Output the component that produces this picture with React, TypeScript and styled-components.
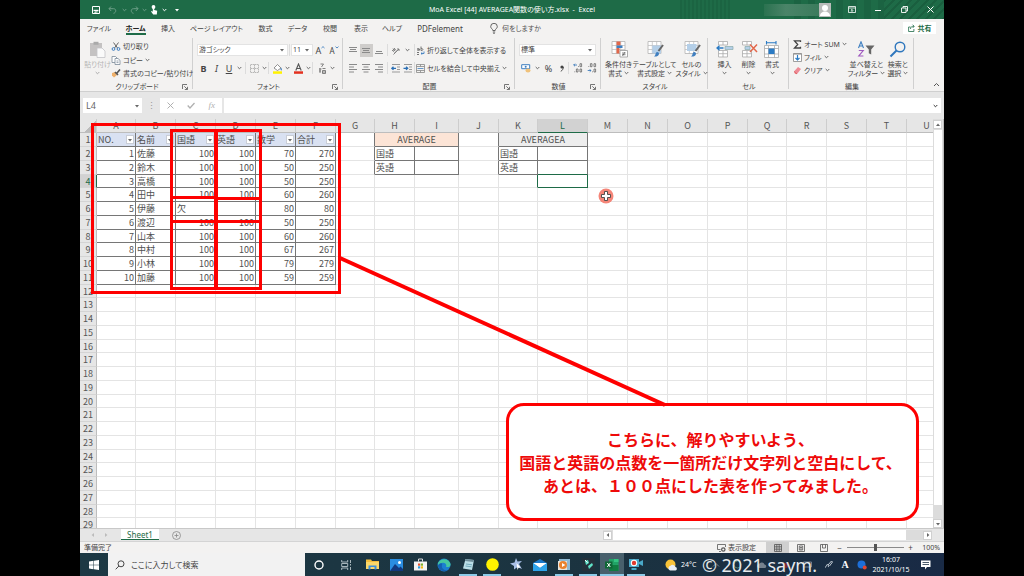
import React from 'react';
import styled, { createGlobalStyle, css } from 'styled-components';

const GREEN = '#1e6b47';
const RED = '#fe0000';
const UI = '"Noto Sans", "Noto Sans CJK JP", sans-serif';
const SHEET = '"Noto Sans CJK JP", "Noto Sans", sans-serif';

const Global = createGlobalStyle`
  *, *::before, *::after { box-sizing: border-box; }
  body { margin: 0; background: #000; }
  button, input, select { font: inherit; color: inherit; margin: 0; padding: 0; border: 0; background: none; border-radius: 0; font-feature-settings: inherit; }
  svg { display: block; flex: none; }
`;

const Page = styled.div`
  display: grid;
  grid-template-columns: 5fr 54fr 5fr;
  height: 100vh;
  background: #000;
  font-family: ${UI};
  font-size: 7px;
  line-height: 9px;
  font-feature-settings: 'palt';
  color: #444;
`;

const Window = styled.main`
  grid-column: 2;
  display: flex;
  flex-direction: column;
  min-width: 0;
  min-height: 0;
  background: #e6e6e6;
  overflow: hidden;
`;

/* ---------- title bar ---------- */

const TitleBar = styled.header`
  flex: none;
  display: grid;
  grid-template-columns: 1fr auto 1fr;
  align-items: center;
  height: 19px;
  background:
    repeating-linear-gradient(135deg, #1a5f3f 0 2px, transparent 2px 6px) right 0 top 0 / 60px 19px no-repeat,
    repeating-linear-gradient(90deg, #1b6442 0 2px, transparent 2px 4px) right 214px top 0 / 50px 19px no-repeat,
    repeating-linear-gradient(90deg, #1b6342 0 7px, transparent 7px 14px) right 60px top 0 / 90px 19px no-repeat,
    ${GREEN};
  color: #fff;
`;
const Title = styled.h1`
  margin: 0;
  font-size: 7px;
  line-height: 19px;
  font-weight: 400;
  white-space: pre;
`;
const QuickBar = styled.div`
  display: flex;
  align-items: center;
  padding-left: 10px;
`;
const WindowButtons = styled.div`
  display: flex;
  align-items: center;
  justify-content: flex-end;
`;
const BarButton = styled.button<{ $w: number; $dim?: boolean }>`
  display: flex;
  align-items: center;
  justify-content: center;
  width: ${p => p.$w}px;
  height: 19px;
  opacity: ${p => (p.$dim ? 0.35 : 1)};
`;
const UserName = styled.span`
  width: 55px;
  height: 12px;
  background: linear-gradient(90deg, #2b7250, #4a8468 40%, #3b7b5c);
`;
const Avatar = styled.span`
  width: 12px;
  height: 14px;
  margin-right: 7px;
  background: #b9bcba;
`;

/* ---------- ribbon ---------- */

const TabStrip = styled.nav`
  flex: none;
  display: flex;
  align-items: stretch;
  height: 19px;
  padding: 0 8px 0 0;
  background: #f3f2f1;
`;
const RibbonTab = styled.button<{ $w: number; $active?: boolean }>`
  display: flex;
  justify-content: center;
  align-items: center;
  width: ${p => p.$w}px;
  white-space: nowrap;
  line-height: 17px;
  ${p => p.$active && css`
    font-weight: 700;
    color: #222;
    background: linear-gradient(${GREEN}, ${GREEN}) center bottom 3px / 20px 2px no-repeat;
  `}
`;
const Latin = styled.span`
  font-size: 8px;
`;
const TellMe = styled.label`
  display: flex;
  align-items: center;
  gap: 4px;
  margin-left: 18px;
  input { width: 60px; height: 17px; }
  input::placeholder { color: #555; opacity: 1; }
`;
const ShareButton = styled.button`
  display: flex;
  align-items: center;
  justify-content: center;
  gap: 3px;
  width: 33px;
  height: 12px;
  margin: 3px 0 0 auto;
  background: #fff;
  color: ${GREEN};
  font-weight: 700;
`;

const Ribbon = styled.div`
  flex: none;
  display: flex;
  height: 54px;
  background: #f3f2f1;
  border-bottom: 1px solid #cfcfcf;
`;
const Group = styled.section<{ $w: number }>`
  flex: none;
  display: flex;
  flex-direction: column;
  width: ${p => p.$w}px;
  padding: 0 3px 0 4px;
  background: linear-gradient(#d0d0d0, #d0d0d0) right top / 1px 51px no-repeat;
`;
const GroupBody = styled.div<{ $column?: boolean }>`
  display: flex;
  flex-direction: ${p => (p.$column ? 'column' : 'row')};
  height: 44px;
`;
const GroupFoot = styled.footer`
  display: grid;
  grid-template-columns: 8px 1fr 8px;
  align-items: center;
  text-align: center;
  height: 9px;
  line-height: 9px;
  white-space: nowrap;
`;
const ToolRow = styled.div<{ $top?: number }>`
  display: flex;
  align-items: center;
  height: 12px;
  margin-top: ${p => p.$top ?? 0}px;
`;
const Tool = styled.button<{ $w: number; $on?: boolean; $size?: number }>`
  flex: none;
  display: flex;
  align-items: center;
  justify-content: center;
  width: ${p => p.$w}px;
  height: 13px;
  font-size: ${p => p.$size ?? 9}px;
  background: ${p => (p.$on ? '#cfcdcb' : 'none')};
`;
const CollapseButton = styled(Tool)`
  margin: auto 1px 0 auto;
`;
const Divider = styled.i`
  flex: none;
  width: 1px;
  height: 12px;
  margin: 0 1px;
  background: #dcdcdc;
`;
const LabelTool = styled.button`
  display: flex;
  align-items: center;
  gap: 2px;
  height: 13px;
  white-space: nowrap;
`;
const BigTool = styled.button<{ $w: number; $dim?: boolean }>`
  flex: none;
  display: flex;
  flex-direction: column;
  align-items: center;
  width: ${p => p.$w}px;
  padding-top: 3px;
  line-height: 9px;
  white-space: nowrap;
  color: ${p => (p.$dim ? '#b5b5b5' : '#444')};
  svg:first-child { margin-bottom: 2px; }
`;
const Line = styled.span`
  display: flex;
  align-items: center;
  justify-content: center;
  gap: 2px;
  min-height: 9px;
`;
const Picker = styled.span<{ $w: number }>`
  flex: none;
  display: grid;
  grid-template-columns: 1fr 8px;
  align-items: center;
  width: ${p => p.$w}px;
  height: 12px;
  background: #fff;
  border: 1px solid #e3e3e3;
  select {
    appearance: none;
    grid-area: 1 / 1 / 2 / 3;
    width: 100%;
    height: 10px;
    line-height: 10px;
    padding-left: 1px;
  }
  svg { grid-area: 1 / 2; pointer-events: none; }
`;

/* ---------- formula bar ---------- */

const FormulaBar = styled.div`
  flex: none;
  display: flex;
  align-items: flex-start;
  height: 27px;
  padding: 6px 3px 0 3px;
  background: #e6e6e6;
`;
const NameBox = styled.label`
  display: flex;
  align-items: center;
  width: 59px;
  height: 15px;
  padding-right: 4px;
  background: #fff;
  input { width: 51px; padding-left: 3px; font-size: 9px; line-height: 15px; color: #666; }
`;
const Grip = styled.span`
  width: 18px;
  line-height: 15px;
  font-size: 9px;
  text-align: center;
  color: #999;
`;
const FxTools = styled.div`
  display: flex;
  width: 62px;
  height: 15px;
  margin-right: 2px;
  background: #fff;
  color: #b0b0b0;
`;
const FxButton = styled.button`
  flex: 1;
  display: flex;
  align-items: center;
  justify-content: center;
  font: italic 9px/13px "Liberation Serif", serif;
`;
const FormulaField = styled.label`
  flex: 1;
  display: flex;
  align-items: center;
  height: 15px;
  padding-right: 3px;
  background: #fff;
  input { flex: 1; min-width: 0; }
`;

/* ---------- worksheet ---------- */

const SheetRow = styled.div`
  flex: 1;
  display: flex;
  min-height: 0;
`;
const Viewport = styled.div`
  position: relative;
  flex: 1;
  min-width: 0;
  overflow: hidden;
  background: #fff;
`;
const Grid = styled.table`
  table-layout: fixed;
  width: 100%;
  min-width: 867px;
  border-collapse: separate;
  border-spacing: 0;
  font-family: ${SHEET};
  font-size: 9px;
  font-feature-settings: normal;
  line-height: 12px;
  color: #505050;
  tbody tr > * { height: 14px; }
  tbody tr:nth-child(4n) > * { height: 13px; line-height: 11px; }
`;
const ColHead = styled.th<{ $on?: boolean }>`
  height: 14px;
  padding: 1px 0 0;
  line-height: 12px;
  font-weight: 400;
  text-align: center;
  background: ${p => (p.$on ? '#d2d2d2' : '#e6e6e6')};
  color: ${p => (p.$on ? GREEN : '#555')};
  border-right: 1px solid #cdcdcd;
  border-bottom: 1px solid ${p => (p.$on ? GREEN : '#bdbdbd')};
`;
const Corner = styled(ColHead)`
  background: linear-gradient(135deg, #e6e6e6 60%, #bcbcbc 60%);
`;
const RowHead = styled.th<{ $on?: boolean }>`
  padding: 0;
  font-weight: 400;
  text-align: center;
  background: ${p => (p.$on ? '#d2d2d2' : '#e6e6e6')};
  color: ${p => (p.$on ? GREEN : '#555')};
  border-right: 1px solid ${p => (p.$on ? GREEN : '#bdbdbd')};
  border-bottom: 1px solid #d4d4d4;
`;
type CellKind = { $num?: boolean; $boxed?: boolean; $fill?: string; $center?: boolean; $active?: boolean; $over?: boolean; $edge?: string };
const Cell = styled.td<CellKind>`
  padding: 0 1px;
  overflow: hidden;
  white-space: nowrap;
  vertical-align: middle;
  text-align: ${p => (p.$center ? 'center' : p.$num ? 'right' : 'left')};
  background: ${p => p.$fill ?? 'transparent'};
  border-right: 1px solid ${p => p.$edge ?? (p.$active ? GREEN : p.$boxed ? '#767676' : '#e4e4e4')};
  border-bottom: 1px solid ${p => (p.$active || p.$over ? GREEN : p.$boxed ? '#767676' : '#e4e4e4')};
`;
const FilterHead = styled.div`
  display: flex;
  align-items: center;
  justify-content: space-between;
  height: 12px;
`;
const FilterButton = styled.button`
  display: flex;
  align-items: center;
  justify-content: center;
  width: 8px;
  height: 9px;
  background: #fff;
  border: 1px solid #c9cdd6;
`;

const Frame = styled.div<{ $x: number; $y: number; $w: number; $h: number }>`
  position: absolute;
  left: ${p => p.$x}px;
  top: ${p => p.$y}px;
  width: ${p => p.$w}px;
  height: ${p => p.$h}px;
  border: 3px solid ${RED};
`;
const Leader = styled.svg`
  position: absolute;
  left: 0;
  top: 0;
`;
const Callout = styled.p`
  position: absolute;
  left: 426px;
  top: 284px;
  width: 413px;
  height: 118px;
  margin: 0;
  padding-right: 4px;
  display: flex;
  flex-direction: column;
  align-items: center;
  justify-content: center;
  border: 3px solid ${RED};
  border-radius: 18px;
  background: #fff;
  color: #ee0a0a;
  font-family: ${SHEET};
  font-size: 16px;
  line-height: 23px;
  font-weight: 700;
  font-feature-settings: normal;
  white-space: nowrap;
`;
const Pointer = styled.svg`
  position: absolute;
  left: 518px;
  top: 69px;
`;

const VScroll = styled.div`
  flex: none;
  display: flex;
  flex-direction: column;
  width: 11px;
  padding: 1px 1px 0 0;
  background: #dcdcdc;
  border-right: 1px solid #bcbcbc;
`;
const ScrollButton = styled.button`
  flex: none;
  display: flex;
  align-items: center;
  justify-content: center;
  width: 9px;
  height: 9px;
  background: #fff;
  border: 1px solid #d0d0d0;
`;
const VThumb = styled.div`
  flex: 1;
  margin: 1px 0 14px 1px;
  background: #fff;
`;

/* ---------- sheet tabs and status ---------- */

const SheetTabs = styled.div`
  flex: none;
  display: flex;
  align-items: center;
  height: 13px;
  border-top: 1px solid #c8c8c8;
  background: #e6e6e6;
`;
const TabArrows = styled.div`
  display: flex;
  gap: 7px;
  width: 41px;
  padding-left: 10px;
`;
const SheetTab = styled.button`
  width: 38px;
  height: 11px;
  margin-bottom: 1px;
  background: #fff;
  border-bottom: 1px solid ${GREEN};
  color: ${GREEN};
  font-size: 8px;
  line-height: 9px;
`;
const AddSheet = styled.button`
  margin-left: 13px;
`;
const HScroll = styled.div`
  display: flex;
  align-items: center;
  width: 329px;
  margin: 0 12px 0 auto;
  height: 10px;
  background: #dcdcdc;
`;
const HThumb = styled.div`
  flex: 1;
  height: 10px;
  margin: 0 17px 0 1px;
  background: #fff;
`;
const StatusBar = styled.div`
  flex: none;
  display: flex;
  align-items: center;
  height: 12px;
  padding: 0 4px;
  background: #f3f2f1;
  border-top: 1px solid #d4d4d4;
`;
const StatusTools = styled.div`
  display: flex;
  align-items: center;
  margin-left: auto;
`;
const DisplaySettings = styled(LabelTool)`
  margin-right: 10px;
`;
const ViewButton = styled.button<{ $on?: boolean }>`
  display: flex;
  align-items: center;
  justify-content: center;
  width: 23px;
  height: 11px;
  background: ${p => (p.$on ? '#cfcfcf' : 'none')};
`;
const Zoom = styled.input`
  appearance: none;
  width: 57px;
  height: 9px;
  margin: 0 3px;
  background: linear-gradient(#8a8a8a, #8a8a8a) center / 100% 1px no-repeat;
  &::-webkit-slider-thumb { appearance: none; width: 3px; height: 7px; background: #555; }
`;
const Percent = styled.output`
  width: 26px;
  text-align: right;
`;

/* ---------- task bar ---------- */

const TaskBar = styled.footer`
  position: relative;
  flex: none;
  display: flex;
  align-items: stretch;
  height: 23px;
  background: linear-gradient(90deg, #1d3944, #1b3340 60%, #192a45);
  color: #fff;
`;
const TaskButton = styled.button<{ $w?: number; $running?: boolean; $on?: boolean }>`
  flex: none;
  display: flex;
  align-items: center;
  justify-content: center;
  width: ${p => p.$w ?? 24}px;
  background: ${p => (p.$on ? '#48606c' : 'none')};
  ${p => p.$running && css`
    background-image: linear-gradient(#8ccbe8, #8ccbe8);
    background-size: ${p.$on ? 24 : 18}px 2px;
    background-position: center bottom;
    background-repeat: no-repeat;
  `}
`;
const Search = styled.label`
  display: flex;
  align-items: center;
  gap: 6px;
  width: 197px;
  padding-left: 7px;
  background: #f2f2f2;
  color: #444;
  input { flex: 1; min-width: 0; font-size: 8px; }
  input::placeholder { color: #444; opacity: 1; }
`;
const Tray = styled.div`
  display: flex;
  align-items: center;
  margin-left: auto;
  padding-right: 4px;
`;
const Weather = styled.button`
  display: flex;
  align-items: center;
  gap: 4px;
  width: 40px;
  font-size: 7px;
`;
const Hidden = styled.div`
  display: flex;
  align-items: center;
  justify-content: space-around;
  width: 114px;
  opacity: 0.4;
`;
const TrayButton = styled.button<{ $w: number }>`
  display: flex;
  align-items: center;
  justify-content: center;
  width: ${p => p.$w}px;
  font: 700 10px/12px "Liberation Serif", serif;
`;
const Clock = styled.time`
  width: 42px;
  text-align: center;
  font-size: 7px;
  line-height: 10px;
`;
const Watermark = styled.span`
  position: absolute;
  right: 127px;
  top: 0;
  font-size: 18px;
  line-height: 25px;
  color: #e6eaed;
  white-space: nowrap;
`;

/* ---------- small drawings ---------- */

const Chevron = ({ c = '#666' }: { c?: string }) => (
  <svg width="5" height="4" viewBox="0 0 5 4" fill="none" stroke={c}><path d="M.7 1l1.8 1.8L4.3 1" /></svg>
);
const Caret = ({ c = '#666', r = 0 }: { c?: string; r?: number }) => (
  <svg width="6" height="6" viewBox="0 0 6 6" fill={c}><path d="M1 2h4L3 4.4z" transform={`rotate(${r} 3 3)`} /></svg>
);
const Launcher = () => (
  <svg width="6" height="6" viewBox="0 0 6 6" fill="none" stroke="#666" strokeWidth=".9"><path d="M.5 5V.5H5M2.3 2.3l3 3M5.5 2.8v2.7H2.8" /></svg>
);
const Bars = ({ d }: { d: string }) => (
  <svg width="9" height="9" viewBox="0 0 9 9" fill="none" stroke="#8a8a8a"><path d={d} /></svg>
);
const Wand = () => (
  <svg width="10" height="9" viewBox="0 0 10 9"><path d="M1 4l3-1 2 3-3 2.500-2-2z" fill="#eeb06b" /><path d="M4 3l3 3M6 4l3-3.500" stroke="#555" strokeWidth="1.600" /></svg>
);
const GridBase = ({ children }: { children?: React.ReactNode }) => (
  <svg width="18" height="17" viewBox="0 0 18 17">
    <path d="M2 .5h13v12H2z" fill="#fff" stroke="#b2b2b2" strokeWidth=".8" />
    <path d="M2 4.500h13M2 8.500h13M6.300.5v12M10.700.5v12" stroke="#b9b9b9" strokeWidth=".7" />
    {children}
  </svg>
);
const Brush = () => (
  <g><path d="M17 4l-4.500 6" stroke="#666" strokeWidth="2" /><path d="M8 15.500c2 .2 4.500 0 5-2.500.2-1.500-1.500-2.500-2.700-1.600C9 12.500 10 14 8 15.500z" fill="#3f7fc0" /></g>
);
const Blocks = ({ children }: { children?: React.ReactNode }) => (
  <svg width="18" height="17" viewBox="0 0 18 17">
    <path d="M2.500.5h9v3.500h-9zM7 .5V4M2.500 9.500h9v6.500h-9zM7 9.500V16M2.500 12.700h9" fill="#fff" stroke="#aaa" strokeWidth=".8" />
    {children}
  </svg>
);

/* ---------- data ---------- */

const COLUMNS = 'ABCDEFGHIJKLMNOPQRSTU'.split('');
const WIDTHS = [39, 40, 40, 40, 40, 40, 39, 40, 44, 40, 39, 50, 40, 40, 40, 40, 39, 40, 40, 40];
const HEADINGS = ['NO.', '名前', '国語', '英語', '数学', '合計'];
const SCORES: (string | number)[][] = [
  [1, '佐藤', 100, 100, 70, 270],
  [2, '鈴木', 100, 100, 50, 250],
  [3, '高橋', 100, 100, 50, 250],
  [4, '田中', 100, 100, 60, 260],
  [5, '伊藤', '欠', '', 80, 80],
  [6, '渡辺', 100, 100, 50, 250],
  [7, '山本', 100, 100, 60, 260],
  [8, '中村', 100, 100, 67, 267],
  [9, '小林', 100, 100, 79, 279],
  [10, '加藤', 100, 100, 59, 259],
];
const SUBJECTS: Record<number, string> = { 2: '国語', 3: '英語' };

const renderCell = (col: string, row: number) => {
  const i = COLUMNS.indexOf(col);
  if (i < 6 && row === 1) {
    return (
      <Cell key={col} $boxed $fill="#d9e1f2">
        <FilterHead>{HEADINGS[i]}<FilterButton aria-label={`${HEADINGS[i]} フィルター`}><Caret /></FilterButton></FilterHead>
      </Cell>
    );
  }
  if (i < 6 && row <= 11) {
    const v = SCORES[row - 2][i];
    return <Cell key={col} $boxed $num={typeof v === 'number'}>{v}</Cell>;
  }
  if (row === 1) {
    if (col === 'H') return <Cell key={col} colSpan={2} $boxed $center $fill="#fce4d6">AVERAGE</Cell>;
    if (col === 'K') return <Cell key={col} colSpan={2} $boxed $center $fill="#ededed">AVERAGEA</Cell>;
    if (col === 'I' || col === 'L') return null;
  }
  if (row <= 3 && (col === 'G' || col === 'J')) return <Cell key={col} $edge="#767676" />;
  if (row <= 3 && 'HIKL'.includes(col)) {
    return <Cell key={col} $boxed $over={col === 'L' && row === 3}>{col === 'H' || col === 'K' ? SUBJECTS[row] : ''}</Cell>;
  }
  return <Cell key={col} $active={col === 'L' && row === 4} $edge={col === 'K' && row === 4 ? GREEN : undefined} />;
};

const TABS: [string, number][] = [
  ['ファイル', 38], ['ホーム', 35], ['挿入', 30], ['ページ レイアウト', 67], ['数式', 31], ['データ', 33], ['校閲', 32], ['表示', 30], ['ヘルプ', 32],
];

const Foot = ({ children, launcher = true }: { children: React.ReactNode; launcher?: boolean }) => (
  <GroupFoot><span /><span>{children}</span>{launcher ? <Launcher /> : <span />}</GroupFoot>
);

export default function App() {
  return (
    <Page lang="ja">
      <Global />
      <Window>
        <TitleBar>
          <QuickBar>
            <BarButton $w={12} aria-label="上書き保存"><svg width="8" height="8" viewBox="0 0 8 8" fill="none" stroke="#fff"><path d="M.5.500h7v7h-7z" /><path d="M1.500 4.500h5" strokeWidth="1.400" /><path d="M3 7.500V6h2.500" /></svg></BarButton>
            <BarButton $w={20} $dim aria-label="元に戻す"><svg width="9" height="8" viewBox="0 0 9 8" fill="none" stroke="#fff"><path d="M3 .5L1 2.700 3.200 5M1 2.700h4.500c3 0 3 4 0 4.600" /></svg></BarButton>
            <BarButton $w={4} $dim aria-label="元に戻す一覧"><Chevron c="#fff" /></BarButton>
            <BarButton $w={16} $dim aria-label="やり直し"><svg width="9" height="8" viewBox="0 0 9 8" fill="none" stroke="#fff"><path d="M6 .5l2 2.200L5.800 5M8 2.700H3.500c-3 0-3 4 0 4.600" /></svg></BarButton>
            <BarButton $w={5} $dim aria-label="やり直し一覧"><Chevron c="#fff" /></BarButton>
            <BarButton $w={14} aria-label="タッチ モード"><svg width="9" height="10" viewBox="0 0 9 10" fill="#fff"><circle cx="3.500" cy="2" r="1.900" /><path d="M2.800 2h1.400v3l3 .8-.4 3.700H3.200L1 6.500l.8-.6 1 .8z" /></svg></BarButton>
            <BarButton $w={6} aria-label="モード一覧"><Chevron c="#fff" /></BarButton>
            <BarButton $w={20} aria-label="クイック アクセスのカスタマイズ"><Caret c="#fff" /></BarButton>
          </QuickBar>
          <Title>MoA Excel [44] AVERAGEA関数の使い方.xlsx  -  Excel</Title>
          <WindowButtons>
            <UserName />
            <Avatar><svg width="12" height="14" viewBox="0 0 12 14" fill="#fff"><circle cx="6" cy="5" r="3" /><path d="M1 13c0-6 10-6 10 0z" /></svg></Avatar>
            <BarButton $w={27} aria-label="リボンの表示"><svg width="8" height="7" viewBox="0 0 8 7" fill="none" stroke="#fff"><path d="M.5.500h7v6h-7zM.5 2h7M4 6V3.500M2.800 4.700L4 3.500l1.200 1.200" strokeWidth=".8" /></svg></BarButton>
            <BarButton $w={26} aria-label="最小化"><svg width="6" height="6" viewBox="0 0 6 6" stroke="#fff"><path d="M0 3.500h6" /></svg></BarButton>
            <BarButton $w={26} aria-label="元のサイズ"><svg width="7" height="7" viewBox="0 0 7 7" fill="none" stroke="#fff" strokeWidth=".9"><path d="M.5 2h4.500v4.500H.5zM2 2V.5h4.500V5H5" /></svg></BarButton>
            <BarButton $w={27} aria-label="閉じる"><svg width="7" height="7" viewBox="0 0 7 7" stroke="#fff"><path d="M.5.500l6 6M6.500.500l-6 6" /></svg></BarButton>
          </WindowButtons>
        </TitleBar>

        <TabStrip>
          {TABS.map(([name, w]) => <RibbonTab key={name} $w={w} $active={name === 'ホーム'}>{name}</RibbonTab>)}
          <RibbonTab $w={64}><Latin>PDFelement</Latin></RibbonTab>
          <TellMe>
            <svg width="8" height="11" viewBox="0 0 8 11" fill="none" stroke="#555" strokeWidth=".9"><path d="M2.800 7.500C2.800 6 .7 5.500.7 3.600a3.300 3.300 0 0 1 6.600 0c0 1.900-2.100 2.400-2.100 3.900zM2.800 9h2.400M3.200 10.300h1.600" /></svg>
            <input placeholder="何をしますか" aria-label="何をしますか" />
          </TellMe>
          <ShareButton>
            <svg width="7" height="8" viewBox="0 0 7 8" fill="none" stroke={GREEN} strokeWidth=".8"><path d="M2.500 3H.6v4.500h5.300V5M2.500 5c0-2 1-2.700 3.500-2.700M4.600.7L6.200 2.300 4.600 4" /></svg>
            共有
          </ShareButton>
        </TabStrip>

        <Ribbon>
          <Group $w={113}>
            <GroupBody>
              <BigTool $w={27} $dim>
                <svg width="17" height="17" viewBox="0 0 17 17"><path d="M1 2h12v13H1z" fill="#c4c2c2" /><path d="M4.500.8h5v3h-5z" fill="#aaa" /><path d="M8 7h5l3 3v6.500H8z" fill="#fafafa" stroke="#c4c4c8" strokeWidth=".8" /></svg>
                貼り付け
                <Line><Chevron c="#aaa" /></Line>
              </BigTool>
              <GroupBody $column>
                <ToolRow $top={2}><LabelTool>
                  <svg width="10" height="9" viewBox="0 0 10 9" fill="none"><path d="M2.500.5l4 5.500M7.500.5l-4 5.500" stroke="#666" /><circle cx="2.500" cy="7" r="1.400" stroke="#3f7fc0" /><circle cx="7.500" cy="7" r="1.400" stroke="#3f7fc0" /></svg>切り取り
                </LabelTool></ToolRow>
                <ToolRow $top={2}><LabelTool>
                  <svg width="10" height="9" viewBox="0 0 10 9" fill="#fff" stroke="#7b8a99" strokeWidth=".8"><path d="M1 .5h3.500L6 2v4.500H1z" /><path d="M4 2.500h3L9 4.300v4.200H4zM5.500 5h2M5.500 6.600h2" /></svg>コピー<Chevron />
                </LabelTool></ToolRow>
                <ToolRow $top={1}><LabelTool><Wand />書式のコピー/貼り付け</LabelTool></ToolRow>
              </GroupBody>
            </GroupBody>
            <Foot>クリップボード</Foot>
          </Group>

          <Group $w={150}>
            <GroupBody $column>
              <ToolRow $top={6}>
                <Picker $w={91}><select aria-label="フォント"><option>游ゴシック</option></select><Caret /></Picker>
                <Divider />
                <Picker $w={22}><select aria-label="フォント サイズ"><option>11</option></select><Caret /></Picker>
                <Tool $w={15} $size={9} aria-label="拡大">A<svg width="4" height="8" viewBox="0 0 4 8" fill="none" stroke="#3f7fc0" strokeWidth=".9"><path d="M.5 2L2 .6 3.500 2" /></svg></Tool>
                <Tool $w={12} $size={8} aria-label="縮小">A<svg width="4" height="8" viewBox="0 0 4 8" fill="none" stroke="#3f7fc0" strokeWidth=".9"><path d="M.5.6L2 2 3.500.6" /></svg></Tool>
              </ToolRow>
              <ToolRow $top={6}>
                <Tool $w={13}><b>B</b></Tool>
                <Tool $w={13}><i>I</i></Tool>
                <Tool $w={12}><u>U</u></Tool>
                <Tool $w={9} aria-label="下線の種類"><Chevron /></Tool>
                <Divider />
                <Tool $w={14} aria-label="罫線"><svg width="9" height="9" viewBox="0 0 9 9" fill="none" stroke="#a8a8a8" strokeWidth=".8"><path d="M.5.500h8v8h-8zM4.500.500v8M.5 4.500h8" strokeDasharray="1.500 .5" /></svg></Tool>
                <Tool $w={6} aria-label="罫線の種類"><Chevron /></Tool>
                <Divider />
                <Tool $w={14} aria-label="塗りつぶし"><svg width="11" height="11" viewBox="0 0 11 11"><path d="M2 5l3.500-3.500L9 5 5.500 7.500z" fill="#fff" stroke="#777" strokeWidth=".8" /><path d="M9 4.500c1.500 2 .8 3 .3 3S8 6.500 9 4.500z" fill="#3f7fc0" /><path d="M1 8.300h9v2.500H1z" fill="#fff200" /></svg></Tool>
                <Tool $w={6} aria-label="塗りつぶしの色"><Chevron /></Tool>
                <Tool $w={16} aria-label="文字の色"><svg width="11" height="11" viewBox="0 0 11 11"><path d="M2.800 7.500L5.500 1l2.700 6.500M3.800 5.500h3.400" fill="none" stroke="#555" strokeWidth="1.100" /><path d="M1 8.300h9v2.500H1z" fill="#e33120" /></svg></Tool>
                <Tool $w={5} aria-label="文字の色一覧"><Chevron /></Tool>
                <Divider />
                <Tool $w={15} aria-label="ふりがな"><svg width="8" height="11" viewBox="0 0 8 11" fill="none" stroke="#666" strokeWidth=".8"><path d="M2.500 1h3L3.500 4M1 6h2.500M2 5v5M1 8h2M4.500 5.500h3M4.500 7.500h3v3h-3zM4.500 9h3" /></svg></Tool>
                <Tool $w={6} aria-label="ふりがな一覧"><Chevron /></Tool>
              </ToolRow>
            </GroupBody>
            <Foot>フォント</Foot>
          </Group>

          <Group $w={172}>
            <GroupBody $column>
              <ToolRow $top={6}>
                <Tool $w={13} aria-label="上揃え"><Bars d="M0 1.500h8M1 3.500h6M0 5.500h8" /></Tool>
                <Tool $w={13} $on aria-label="上下中央"><Bars d="M0 2.500h8M1 4.500h6M0 6.500h8" /></Tool>
                <Tool $w={13} aria-label="下揃え"><Bars d="M1 5.500h6M0 7.500h8" /></Tool>
                <Divider />
                <Tool $w={12} aria-label="方向"><svg width="9" height="9" viewBox="0 0 9 9" fill="none" stroke="#777" strokeWidth=".9"><path d="M1 5l3-3M2 2.500l2.500 3M3.500 6.500a1.500 1.500 0 1 1 2-2M2.500 8.500L8 3M8 5V3H6" /></svg></Tool>
                <Tool $w={12} aria-label="方向一覧"><Chevron /></Tool>
                <Divider />
                <LabelTool>
                  <svg width="9" height="9" viewBox="0 0 9 9" fill="none" strokeWidth=".9"><path d="M1 3c1.500-1 2.500 0 2.500 1.500M3.500 3C1.500 3 1 4.500 2 4.500S3.500 3.500 3.500 3M5 .5v4c2.500.5 2.500-2.500 0-2M1 6.500h2M1 8.500h2" stroke="#666" /><path d="M8 5.500v2H5M6.300 6.300L5 7.500l1.300 1.200" stroke="#3f7fc0" /></svg>折り返して全体を表示する
                </LabelTool>
              </ToolRow>
              <ToolRow $top={6}>
                <Tool $w={13} aria-label="左揃え"><Bars d="M0 .5h8M0 3h5M0 5.500h8M0 8h5" /></Tool>
                <Tool $w={13} aria-label="中央揃え"><Bars d="M0 .5h8M1.500 3h5M0 5.500h8M1.500 8h5" /></Tool>
                <Tool $w={13} aria-label="右揃え"><Bars d="M0 .5h8M3 3h5M0 5.500h8M3 8h5" /></Tool>
                <Divider />
                <Tool $w={12} aria-label="インデントを減らす"><svg width="9" height="9" viewBox="0 0 9 9" fill="none"><path d="M1 .5h8M6 3h3M6 5.500h3M1 8h8" stroke="#999" /><path d="M5 4.300H.8M2.500 2.700L.8 4.300l1.700 1.600" stroke="#2b6fb5" strokeWidth="1.300" /></svg></Tool>
                <Tool $w={12} aria-label="インデントを増やす"><svg width="9" height="9" viewBox="0 0 9 9" fill="none"><path d="M1 .5h8M6 3h3M6 5.500h3M1 8h8" stroke="#999" /><path d="M.5 4.300h4.200M3 2.700l1.700 1.600L3 5.900" stroke="#2b6fb5" strokeWidth="1.300" /></svg></Tool>
                <Divider />
                <LabelTool>
                  <svg width="9" height="9" viewBox="0 0 9 9" fill="none" strokeWidth=".8"><path d="M.5.500h8v8h-8zM.5 2.500h8M.5 6.500h8M4.500.500v2M4.500 6.500v2" stroke="#888" /><path d="M1.500 4.500h6" stroke="#3f7fc0" /></svg>セルを結合して中央揃え<Chevron />
                </LabelTool>
              </ToolRow>
            </GroupBody>
            <Foot>配置</Foot>
          </Group>

          <Group $w={86}>
            <GroupBody $column>
              <ToolRow $top={6}>
                <Picker $w={77}><select aria-label="表示形式"><option>標準</option></select><Caret /></Picker>
              </ToolRow>
              <ToolRow $top={6}>
                <Tool $w={15} aria-label="通貨"><svg width="11" height="9" viewBox="0 0 11 9"><path d="M.7.700h8v4h-8z" fill="#fff" stroke="#3f7fc0" /><circle cx="4.700" cy="2.700" r="1" fill="#3f7fc0" /><ellipse cx="7" cy="6.500" rx="2.500" ry="2" fill="#f0c27b" /></svg></Tool>
                <Tool $w={6} aria-label="通貨一覧"><Chevron /></Tool>
                <Tool $w={17}>%</Tool>
                <Tool $w={10} aria-label="桁区切り"><svg width="4" height="7" viewBox="0 0 4 7"><circle cx="2" cy="2" r="1.600" fill="#444" /><path d="M3.300 2c0 2-1 3.500-2.500 4.300" stroke="#444" fill="none" /></svg></Tool>
                <Divider />
                <Tool $w={15} aria-label="小数点以下を増やす"><svg width="10" height="10" viewBox="0 0 10 10" fill="none" strokeWidth=".8"><path d="M4 2H.7M2 .7L.7 2 2 3.300" stroke="#2b6fb5" /><path d="M7 .7h1.600v3H7zM3.400 6h1.600v3H3.400zM7 6h1.600v3H7zM5 3.500h.8M1.400 8.800h.8" stroke="#666" /></svg></Tool>
                <Tool $w={13} aria-label="小数点以下を減らす"><svg width="10" height="10" viewBox="0 0 10 10" fill="none" strokeWidth=".8"><path d="M.7 7.500H4M2.700 6.200L4 7.500 2.700 8.800" stroke="#2b6fb5" /><path d="M7 .7h1.600v3H7zM3.400.7h1.600v3H3.400zM7 6h1.600v3H7zM1.400 3.500h.8M5.200 8.800H6" stroke="#666" /></svg></Tool>
              </ToolRow>
            </GroupBody>
            <Foot>数値</Foot>
          </Group>

          <Group $w={107}>
            <GroupBody>
              <BigTool $w={27}>
                <GridBase><path d="M6.500.5h4v4h-4z" fill="#e2674a" /><path d="M6.500 4.500h6v2.500h-6z" fill="#3f7fc0" /><path d="M6.500 7h3v5.500h-3z" fill="#e2674a" /><path d="M10 9.500h7.500v6.500H10z" fill="#fff" stroke="#999" strokeWidth=".8" /><path d="M12 12h3.500M12 13.700h3.500M15 11l-2.500 4" stroke="#555" strokeWidth=".7" /></GridBase>
                条件付き
                <Line>書式<Chevron /></Line>
              </BigTool>
              <BigTool $w={45}>
                <GridBase><path d="M6.300 4.500h8.700v8H6.300z" fill="#b4cfe8" /><Brush /></GridBase>
                テーブルとして
                <Line>書式設定<Chevron /></Line>
              </BigTool>
              <BigTool $w={29}>
                <GridBase><path d="M4 3h9.500v7H4z" fill="#b4cfe8" /><Brush /></GridBase>
                セルの
                <Line>スタイル<Chevron /></Line>
              </BigTool>
            </GroupBody>
            <Foot launcher={false}>スタイル</Foot>
          </Group>

          <Group $w={81}>
            <GroupBody>
              <BigTool $w={25}>
                <Blocks><path d="M9 5.500h8v3H9z" fill="#b4cfe8" stroke="#8aa" strokeWidth=".7" /><path d="M7.500 7H1M3.500 4.700L1 7l2.500 2.300" fill="none" stroke="#2b7bc4" strokeWidth="1.300" /></Blocks>
                挿入
                <Line><Chevron /></Line>
              </BigTool>
              <BigTool $w={23}>
                <Blocks><path d="M5 5.500h5v3H5z" fill="#b4cfe8" stroke="#8aa" strokeWidth=".7" /><path d="M10 3.500l7 7.500M17 3.500L10 11" stroke="#e2674a" strokeWidth="1.500" /></Blocks>
                削除
                <Line><Chevron /></Line>
              </BigTool>
              <BigTool $w={24}>
                <svg width="18" height="17" viewBox="0 0 18 17"><path d="M1.500 4.500h14v12h-14zM1.500 7.500h14M1.500 13h14M5.500 4.500v12M11.500 4.500v12" fill="#fff" stroke="#aaa" strokeWidth=".8" /><path d="M5.500 7.500h6V13h-6z" fill="#2b7bc4" /><path d="M3.500 1.800h9.500M3.500 0v3.600M13 0v3.600" stroke="#2b7bc4" strokeWidth="1.100" /></svg>
                書式
                <Line><Chevron /></Line>
              </BigTool>
            </GroupBody>
            <Foot launcher={false}>セル</Foot>
          </Group>

          <Group $w={125}>
            <GroupBody>
              <GroupBody $column>
                <ToolRow><LabelTool>
                  <svg width="9" height="9" viewBox="0 0 9 9" fill="none" stroke="#444" strokeWidth="1.300"><path d="M7.500 2V.900h-6l3.200 3.600L1.500 8h6V6.800" /></svg>オート SUM<Chevron />
                </LabelTool></ToolRow>
                <ToolRow $top={1}><LabelTool>
                  <svg width="9" height="9" viewBox="0 0 9 9"><path d="M.5.500h8v8h-8z" fill="#fff" stroke="#888" strokeWidth=".8" /><path d="M.5 1h8" stroke="#888" /><path d="M4.500 2v5M2.500 5l2 2 2-2" fill="none" stroke="#2b7bc4" strokeWidth="1.200" /></svg>フィル<Chevron />
                </LabelTool></ToolRow>
                <ToolRow $top={1}><LabelTool>
                  <svg width="9" height="9" viewBox="0 0 9 9"><path d="M1 5.500L5 1l3 2-4 5H2z" fill="#ee8a95" /><path d="M1 5.500l3 2.500" stroke="#d66" /></svg>クリア<Chevron />
                </LabelTool></ToolRow>
              </GroupBody>
              <BigTool $w={39}>
                <svg width="18" height="17" viewBox="0 0 18 17" fill="none"><path d="M1.500 7L4 .8 6.500 7M2.300 5h3.400" stroke="#3f7fc0" strokeWidth="1.100" /><path d="M1.800 9.500h4.400L1.800 15h4.600" stroke="#a05bc0" strokeWidth="1.200" /><path d="M8.500 4.500h9l-3.300 4v5l-2.400-1.200V8.500z" fill="#666" /></svg>
                並べ替えと
                <Line>フィルター<Chevron /></Line>
              </BigTool>
              <BigTool $w={24}>
                <svg width="18" height="17" viewBox="0 0 18 17" fill="none" stroke="#2f77bd"><circle cx="11" cy="6" r="4.800" strokeWidth="1.400" /><path d="M7.500 9.500L1.500 15.500" strokeWidth="2" /></svg>
                検索と
                <Line>選択<Chevron /></Line>
              </BigTool>
            </GroupBody>
            <Foot launcher={false}>編集</Foot>
          </Group>
          <CollapseButton $w={13} aria-label="リボンを折りたたむ">
            <svg width="7" height="5" viewBox="0 0 7 5" fill="none" stroke="#555"><path d="M1 4l2.500-2.500L6 4" /></svg>
          </CollapseButton>
        </Ribbon>

        <FormulaBar>
          <NameBox><input defaultValue="L4" aria-label="名前ボックス" /><Caret /></NameBox>
          <Grip>⋮</Grip>
          <FxTools>
            <FxButton aria-label="キャンセル"><svg width="7" height="7" viewBox="0 0 7 7" stroke="#b0b0b0"><path d="M.5.500l6 6M6.500.500l-6 6" /></svg></FxButton>
            <FxButton aria-label="入力"><svg width="8" height="7" viewBox="0 0 8 7" fill="none" stroke="#b0b0b0" strokeWidth="1.300"><path d="M.7 3.500L3 6l4.500-5" /></svg></FxButton>
            <FxButton>fx</FxButton>
          </FxTools>
          <FormulaField><input aria-label="数式バー" /><Chevron c="#333" /></FormulaField>
        </FormulaBar>

        <SheetRow>
          <Viewport>
            <Grid>
              <colgroup>
                <col style={{ width: 17 }} />
                {WIDTHS.map((w, i) => <col key={i} style={{ width: w }} />)}
                <col />
              </colgroup>
              <thead>
                <tr>
                  <Corner aria-label="すべて選択" />
                  {COLUMNS.map(c => <ColHead key={c} scope="col" $on={c === 'L'}>{c}</ColHead>)}
                </tr>
              </thead>
              <tbody>
                {Array.from({ length: 29 }, (_, r) => (
                  <tr key={r}>
                    <RowHead scope="row" $on={r === 3}>{r + 1}</RowHead>
                    {COLUMNS.map(c => renderCell(c, r + 1))}
                  </tr>
                ))}
              </tbody>
            </Grid>
            <Frame $x={11} $y={4} $w={250} $h={171} />
            <Frame $x={90} $y={10} $w={48} $h={70} />
            <Frame $x={134} $y={10} $w={48} $h={71} />
            <Frame $x={90} $y={77} $w={48} $h={27} />
            <Frame $x={134} $y={78} $w={48} $h={26} />
            <Frame $x={90} $y={101} $w={48} $h={70} />
            <Frame $x={134} $y={101} $w={48} $h={70} />
            <Callout>
              <span>こちらに、解りやすいよう、</span>
              <span>国語と英語の点数を一箇所だけ文字列と空白にして、</span>
              <span>あとは、１００点にした表を作ってみました。</span>
            </Callout>
            <Leader width="600" height="300" viewBox="0 0 600 300"><path d="M260 139L585 286" stroke={RED} strokeWidth="4" /></Leader>
            <Pointer width="16" height="16" viewBox="0 0 16 16"><circle cx="8" cy="8" r="7.500" fill="#f58578" /><path d="M6.500 3.500h3v3h3v3h-3v3h-3v-3h-3v-3h3z" fill="#fff" stroke="#444" strokeWidth=".9" /></Pointer>
          </Viewport>
          <VScroll>
            <ScrollButton aria-label="上へ"><Caret r={180} /></ScrollButton>
            <VThumb />
            <ScrollButton aria-label="下へ"><Caret /></ScrollButton>
          </VScroll>
        </SheetRow>

        <SheetTabs>
          <TabArrows><Caret r={90} c="#bbb" /><Caret r={-90} c="#bbb" /></TabArrows>
          <SheetTab>Sheet1</SheetTab>
          <AddSheet aria-label="新しいシート"><svg width="9" height="9" viewBox="0 0 9 9" fill="none" stroke="#888" strokeWidth=".8"><circle cx="4.500" cy="4.500" r="4" /><path d="M4.500 2.500v4M2.500 4.500h4" /></svg></AddSheet>
          <HScroll>
            <ScrollButton aria-label="左へ"><Caret r={90} /></ScrollButton>
            <HThumb />
            <ScrollButton aria-label="右へ"><Caret r={-90} /></ScrollButton>
          </HScroll>
        </SheetTabs>

        <StatusBar>
          <span>準備完了</span>
          <StatusTools>
            <DisplaySettings>
              <svg width="9" height="8" viewBox="0 0 9 8" fill="none" stroke="#555" strokeWidth=".8"><path d="M3.500 5.500h-3v-5h8V3M2 7.500h2" /><circle cx="6.300" cy="5.500" r="1.700" strokeWidth="1.200" /></svg>表示設定
            </DisplaySettings>
            <ViewButton $on aria-label="標準"><svg width="8" height="8" viewBox="0 0 8 8" fill="none" stroke="#555" strokeWidth=".8"><path d="M.5.500h7v7h-7zM.5 2.800h7M.5 5.200h7M2.800.500v7M5.200.500v7" /></svg></ViewButton>
            <ViewButton aria-label="ページ レイアウト"><svg width="8" height="8" viewBox="0 0 8 8" fill="none" stroke="#555" strokeWidth=".8"><path d="M.5.500h7v7h-7zM2.300 2h3.400v4H2.300zM3 3.500h2M3 5h2" /></svg></ViewButton>
            <ViewButton aria-label="改ページ プレビュー"><svg width="8" height="8" viewBox="0 0 8 8" fill="none" stroke="#555" strokeWidth=".8"><path d="M.5.500h7v7h-7zM2.500.500V4h3V.500" /></svg></ViewButton>
            <Tool $w={9} $size={8}>−</Tool>
            <Zoom type="range" min="10" max="190" defaultValue="100" aria-label="ズーム" />
            <Tool $w={7} $size={8}>+</Tool>
            <Percent>100%</Percent>
          </StatusTools>
        </StatusBar>

        <TaskBar>
          <TaskButton $w={28} aria-label="スタート"><svg width="10" height="10" viewBox="0 0 10 10" fill="#fff"><path d="M0 1.500L4.500.8v4H0zM5 .7L10 0v4.800H5zM0 5.300h4.500v4L0 8.600zM5 5.300h5V10l-5-.7z" /></svg></TaskButton>
          <Search>
            <svg width="10" height="10" viewBox="0 0 10 10" fill="none" stroke="#444"><circle cx="6" cy="3.800" r="3" /><path d="M3.900 6L.7 9.300" /></svg>
            <input placeholder="ここに入力して検索" aria-label="ここに入力して検索" />
          </Search>
          <TaskButton $w={28} aria-label="Cortana"><svg width="10" height="10" viewBox="0 0 10 10"><circle cx="5" cy="5" r="4" fill="none" stroke="#fff" strokeWidth="1.400" /></svg></TaskButton>
          <TaskButton $w={27} aria-label="タスク ビュー"><svg width="11" height="10" viewBox="0 0 11 10" fill="none" stroke="#b7c4ca" strokeWidth=".9"><path d="M.7 0v2h6V0M.7 10V8h6v2M.7 3.500h6v3h-6zM9.500 0v3M9.500 4v1.500M9.500 7v3" /></svg></TaskButton>
          <TaskButton aria-label="エクスプローラー"><svg width="13" height="11" viewBox="0 0 13 11"><path d="M0 .5h5l1 1.500h7V10H0z" fill="#f5bd3a" /><path d="M0 3h13v7H0z" fill="#fcd769" /><path d="M2.500 10.500V6.500h8v4h-2V8h-4v2.500z" fill="#3c8fdc" /></svg></TaskButton>
          <TaskButton aria-label="フォト"><svg width="13" height="12" viewBox="0 0 13 12"><path d="M0 0h13v12H0z" fill="#2a8de0" /><path d="M0 12l5-7 4 4 1.500-1.500L13 10v2z" fill="#12397e" /><circle cx="9.500" cy="3.500" r="1.500" fill="#fff" /></svg></TaskButton>
          <TaskButton aria-label="ストア"><svg width="13" height="13" viewBox="0 0 13 13"><path d="M4.500 3.500V1h4v2.500" fill="none" stroke="#ddd" /><path d="M0 3.500h13V12.500H0z" fill="#f4f4f4" /><path d="M4 5.500h2.200v2.200H4z" fill="#e8542c" /><path d="M6.800 5.500H9v2.200H6.800z" fill="#7bb42d" /><path d="M4 8.300h2.200v2.200H4z" fill="#2a9de0" /><path d="M6.800 8.300H9v2.200H6.800z" fill="#f7b718" /></svg></TaskButton>
          <TaskButton aria-label="Edge"><svg width="14" height="14" viewBox="0 0 14 14"><circle cx="7" cy="7" r="6.500" fill="#1c7fd0" /><path d="M1 5C3 0 12-.5 13.500 6c.3 2.500-2 3.500-4.500 2.800C10 7 8.500 4.800 6 4.800 4 4.800 2 5.500 1 8z" fill="#45c7a0" /><path d="M5 7c-1 3 2 6 6 5C7 15 1 12 1 7.500 2 5 6 4.500 5 7z" fill="#1460b0" /></svg></TaskButton>
          <TaskButton $running aria-label="メモ帳"><svg width="13" height="13" viewBox="0 0 13 13"><path d="M3.500 1l8.500 1-2 10-9-1.500z" fill="#bcdfe8" /><path d="M3.500 1l8.500 1-.4 2L3 3z" fill="#6d8d99" /><path d="M4 6l6 .8M3.500 8l6 .8" stroke="#5f9db0" strokeWidth=".8" /></svg></TaskButton>
          <TaskButton $running aria-label="録音"><svg width="13" height="13" viewBox="0 0 13 13"><circle cx="6.500" cy="6.500" r="6.300" fill="#fff200" /></svg></TaskButton>
          <TaskButton aria-label="ツール"><svg width="13" height="13" viewBox="0 0 13 13"><path d="M6 0l1.500 3.500L12 3 9 6l3 5-4.500-2L4 11.500 4 8 0 5.500l4.500-1z" fill="#a9bfe6" /><path d="M6.500 5l4 4.500-2 .3L7.500 12z" fill="#fff" /></svg></TaskButton>
          <TaskButton aria-label="メール"><svg width="14" height="12" viewBox="0 0 14 12"><path d="M0 4l7-4 7 4v8H0z" fill="#1c78c8" /><path d="M0 4h14L7 9z" fill="#fff" /><path d="M0 4l7 5 7-5v8H0z" fill="#2ea3ea" /></svg></TaskButton>
          <TaskButton $running aria-label="プレーヤー"><svg width="12" height="12" viewBox="0 0 12 12"><path d="M1 0h11v11H1z" fill="#8fb9d3" /><path d="M0 2h9v9H0z" fill="#e9e4dc" /><circle cx="5" cy="6" r="4" fill="#e9822f" /><path d="M4 4l3.300 2L4 8z" fill="#fff" /></svg></TaskButton>
          <TaskButton $running aria-label="動画編集"><svg width="13" height="13" viewBox="0 0 13 13"><path d="M0 0h13v13H0z" fill="#24313b" /><path d="M3 3l3-1 1 3-3 2zM6 8l4-3 1 2-4 4z" fill="#5fe3c8" /><path d="M3 2l2.500 2.500" stroke="#fff" /></svg></TaskButton>
          <TaskButton $running $on aria-label="Excel"><svg width="14" height="12" viewBox="0 0 14 12"><path d="M4 0h9.500v12H4z" fill="#21a366" /><path d="M4 6h9.500v6H4z" fill="#107c41" /><path d="M9 0h4.500v3H9z" fill="#33c481" /><path d="M0 2.500h7.500v7H0z" fill="#0e6635" /><path d="M2.300 4l3 4M5.300 4l-3 4" stroke="#fff" /></svg></TaskButton>
          <TaskButton $running aria-label="録画"><svg width="14" height="13" viewBox="0 0 14 13"><path d="M0 1h10v8H0zM10 4l4-2v6l-4-2zM2.500 10h5v2h-5z" fill="#4aa9c9" /><circle cx="5" cy="5" r="3.200" fill="#fff" /><circle cx="5" cy="5" r="2.200" fill="#e23b2e" /></svg></TaskButton>

          <Tray>
            <Weather>
              <svg width="12" height="12" viewBox="0 0 12 12"><circle cx="5.500" cy="5.500" r="5" fill="#f9c338" /><path d="M5 11.500a2.500 2.500 0 0 1 .5-4.800 3 3 0 0 1 5 1.300 1.800 1.800 0 0 1 0 3.500z" fill="#e9eef4" /></svg>
              24°C
            </Weather>
            <Hidden>
              <svg width="8" height="8" viewBox="0 0 8 8" fill="none" stroke="#fff"><path d="M1 5.500L4 2.500l3 3" /></svg>
              <svg width="9" height="9" viewBox="0 0 9 9" fill="none" stroke="#9fb"><circle cx="4.500" cy="4.500" r="3.500" /></svg>
              <svg width="11" height="8" viewBox="0 0 11 8" fill="#fff"><path d="M3 7a2 2 0 0 1 0-4 3 3 0 0 1 5.500.5A1.800 1.800 0 0 1 9 7z" /></svg>
              <svg width="9" height="9" viewBox="0 0 9 9" fill="#f22"><circle cx="4.500" cy="5.500" r="2.800" /></svg>
              <svg width="9" height="8" viewBox="0 0 9 8" fill="none" stroke="#fff"><path d="M.5 1h8v5h-8z" /></svg>
            </Hidden>
            <TrayButton $w={18} aria-label="ペン"><svg width="9" height="9" viewBox="0 0 9 9" fill="none" stroke="#d5dde4" strokeWidth=".9"><path d="M1 7.500c2-1 1-3 2.500-3s0 3 1.500 2M4 5l3.500-4 1 1L5.500 6" /></svg></TrayButton>
            <TrayButton $w={16}>A</TrayButton>
            <TrayButton $w={17} aria-label="IME"><svg width="10" height="10" viewBox="0 0 10 10"><circle cx="4.500" cy="4.500" r="4" fill="#1d6fd8" /><circle cx="7.700" cy="7.500" r="2" fill="#e2452f" /></svg></TrayButton>
            <Clock>16:07<br />2021/10/15</Clock>
            <TrayButton $w={28} aria-label="通知"><svg width="10" height="10" viewBox="0 0 10 10"><path d="M0 .5h9.500v6.500H6L4 9.500V7H0z" fill="#fff" /><path d="M1.500 2.500h6.500M1.500 4.500h6.500" stroke="#1b3045" strokeWidth=".8" /></svg></TrayButton>
          </Tray>
          <Watermark>© 2021 saym.</Watermark>
        </TaskBar>
      </Window>
    </Page>
  );
}
